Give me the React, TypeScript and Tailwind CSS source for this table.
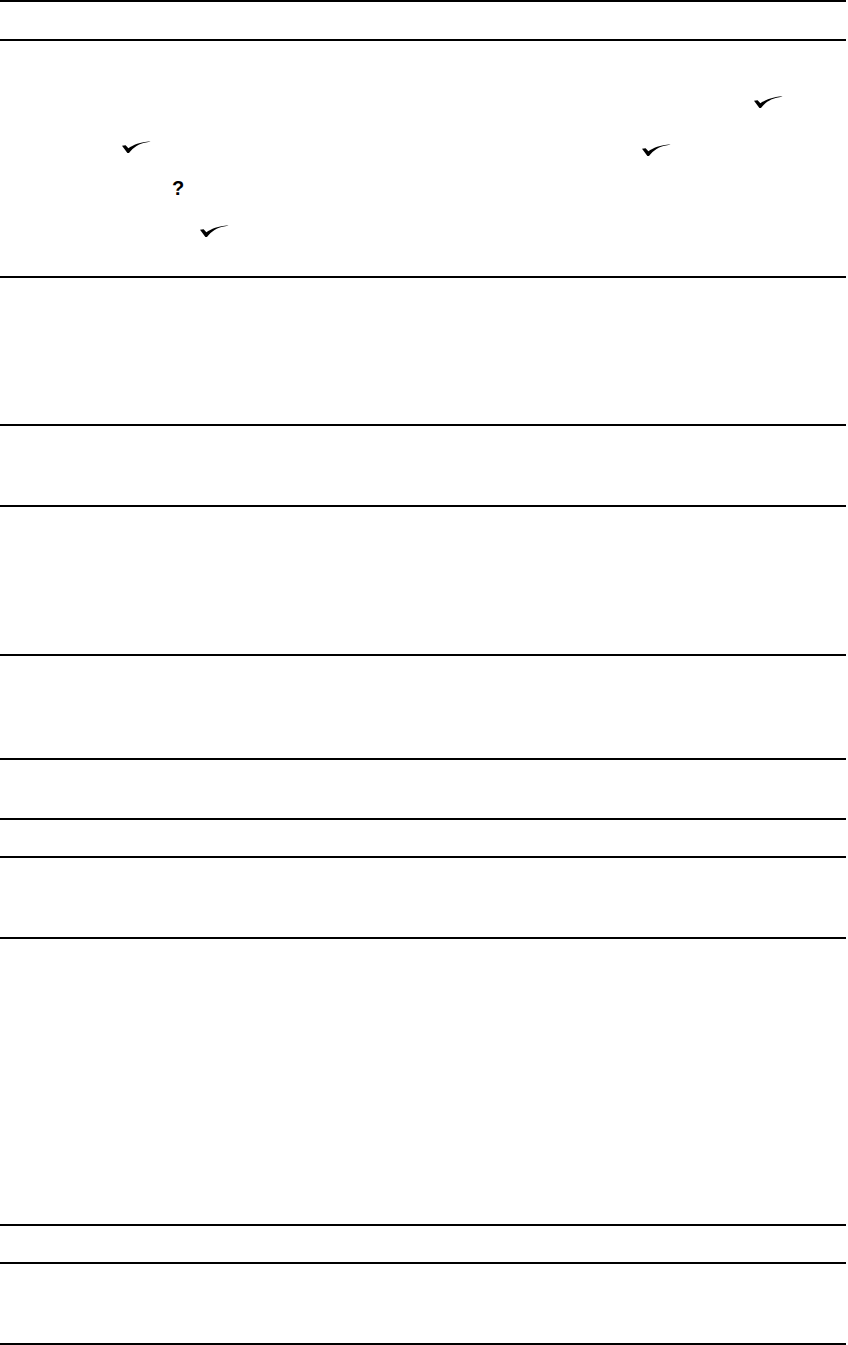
import React from "react";

function Check({ className = "" }: { className?: string }) {
  return (
    <svg width="29" height="12" viewBox="0 0 29 12" className={className}>
      <path
        d="M0 4.8 L3.6 4.2 L6.4 7.2 C11 3.9 18 1.1 28.5 0.2 C27 0.9 26 1 24 1.4 C17 2.8 11.5 5.8 7 12 L5.4 12 Z"
        fill="#000"
      />
    </svg>
  );
}

export default function App() {
  const rows = [39, 237, 148, 81, 149, 104, 60, 38, 81, 287, 38];
  return (
    <div className="w-[848px] h-[1345px] bg-white" style={{ fontFamily: '"Liberation Sans", Arial, sans-serif' }}>
      <div className="w-[846px]">
        <div className="h-[39px] border-t-2 border-black" />
        <div className="h-[237px] border-t-2 border-black flex flex-col">
          <div className="h-[12px] mt-[55px] flex">
            <Check className="ml-[754px]" />
          </div>
          <div className="h-[15px] mt-[33px] flex items-start">
            <Check className="ml-[122px]" />
            <Check className="ml-[491px] mt-[3px]" />
          </div>
          <div className="h-[20px] mt-[22px] flex items-start">
            <span className="ml-[172px] text-[20px] leading-[20px] font-bold">?</span>
          </div>
          <div className="h-[12px] mt-[27px] flex">
            <Check className="ml-[200px]" />
          </div>
        </div>
        {rows.slice(2).map((h, i) => (
          <div key={i} className="border-t-2 border-black" style={{ height: h }} />
        ))}
        <div className="h-[83px] border-t-2 border-b-2 border-black" />
      </div>
    </div>
  );
}
